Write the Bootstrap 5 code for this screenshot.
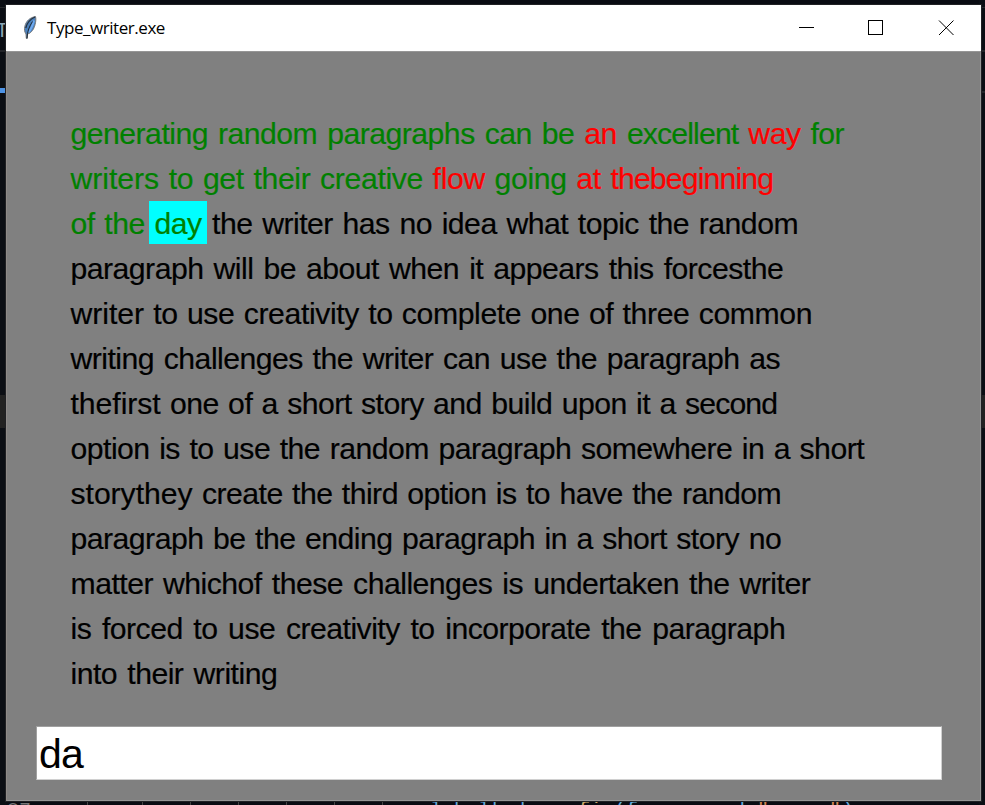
<!DOCTYPE html>
<html lang="en">
<head>
<meta charset="utf-8">
<meta name="viewport" content="width=device-width, initial-scale=1">
<title>Type_writer.exe</title>
<link href="https://cdn.jsdelivr.net/npm/bootstrap@5.3.0/dist/css/bootstrap.min.css" rel="stylesheet">
<style>
  body { background: #090b12; height: 805px; width: 985px; font-family: "Liberation Sans", Arial, sans-serif; }
  .desk { width: 985px; height: 805px; }
  /* editor that shows around the window */
  .edge { top: 0; height: 805px; width: 6px; background: #0b0e14; }
  .edge i { display: block; position: absolute; left: 0; width: 100%; }
  .edge b { position: absolute; top: 18px; left: -4px; font: 20px/24px "Liberation Sans", sans-serif; color: #8ba5b5; }
  .code-strip { left: 0; top: 802px; width: 985px; height: 3px; font: 20px/20px "Liberation Mono", monospace; color: #62aadb; }
  .code-strip span { position: absolute; top: -1px; white-space: pre; }
  .code-strip i { position: absolute; top: 0; width: 1px; height: 3px; background: #444; }
  .win { margin: 5px 0 0 6px; width: 975px; height: 796px; background: #808080; outline: 1px solid #202124; }
  .title-row { height: 46px; background: #fff; flex: none; }
  .title-text { font: 17px/46px "Open Sans", "Noto Sans", sans-serif; letter-spacing: -.45px; color: #000; margin-left: 9px; }
  .frame-body { border: 1px solid #969696; border-left-color: #8e8a88; }
  .words { padding: 59px 0 0 58.500px; }
  .ln { height: 45px; font-size: 30.2px; line-height: 46px; color: #000; font-kerning: none; letter-spacing: -.52px; -webkit-text-stroke: .2px; }
  .ln span { padding: 0 4.300px 0 5px; height: 43px; flex: none; white-space: pre; }
  .ok { color: #008000; } .bad { color: #f00; } .cur { background: #0ff; }
  .ln .cur { padding-right: 5px; }
  .ln .tight { letter-spacing: -.85px; }
  .ln .wide { letter-spacing: -.05px; }
  .l2 { letter-spacing: -.36px; } .l5 { letter-spacing: -.4px; }
  .l1{width:783px} .l2{width:712px} .l3{width:737px} .l4{width:722px} .l5{width:751px} .l6{width:719px} .l7{width:716px}
  .l8{width:803px} .l9{width:720px} .l10{width:720px} .l11{width:749px} .l12{width:724px} .l13{width:216px}
  .entry { margin: 30px 0 0 29px; width: 906px; height: 54px; padding: 2px 0 0 2px; border: 1px solid; border-color: #a0a0a0 #d0d0d0 #d0d0d0 #a0a0a0; background: #fff; color: #000; font-size: 41px; line-height: 50px; letter-spacing: -.8px; outline: none; border-radius: 0; }
</style>
<script src="https://cdn.jsdelivr.net/npm/bootstrap@5.3.0/dist/js/bootstrap.bundle.min.js"></script>
</head>
<body class="m-0 overflow-hidden">
<div class="desk position-relative overflow-hidden">
  <div class="edge position-absolute start-0 overflow-hidden">
    <i style="top:7px;height:1px;background:#25272b"></i>
    <b>T</b>
    <i style="top:50px;height:2px;background:#222429"></i>
    <i style="top:88px;height:5px;background:#4d93e6"></i>
    <i style="top:395px;height:33px;background:#222"></i>
  </div>
  <div class="edge position-absolute end-0">
    <i style="top:7px;height:1px;background:#25272b"></i>
    <i style="top:50px;height:2px;background:#222429"></i>
    <i style="top:91px;height:2px;background:#222429"></i>
    <i style="top:395px;height:33px;background:#222"></i>
  </div>
  <div class="code-strip position-absolute overflow-hidden">
    <span style="left:7px;color:#777">87</span>
    <i style="left:87px"></i><i style="left:142px"></i><i style="left:190px"></i><i style="left:238px"></i><i style="left:286px"></i><i style="left:334px"></i><i style="left:382px"></i>
    <span style="left:430px">label</span><span style="left:492px">b</span><span style="left:520px">b</span>
    <span style="left:578px;color:#c9a86a">fi</span><span style="left:614px">(f</span>
    <span style="left:733px">d</span><span style="left:757px;color:#ce8250">"</span><span style="left:829px;color:#ce8250">"</span><span style="left:842px">)</span>
  </div>
  <main class="win position-relative d-flex flex-column">
    <header class="title-row d-flex align-items-center">
      <svg class="ms-3" width="16" height="26" viewBox="0 0 16 26">
        <path d="M13.500 1.500C8 2.500 4 6 2.800 11.500c-.6 3-.5 5 1.200 7.500l.3 4.300h1L5.500 19c4-1 6.500-5 7.600-9.500.8-3 1-6 .4-8z" fill="#4b80bb" stroke="#77797b"/>
        <path d="M13 2C8.500 4 5 8 3.800 13" fill="none" stroke="#253240" stroke-width="1.300"/>
        <path d="M12 5.500C10.500 11 8.500 15 6.500 17.500" fill="none" stroke="#6faaf0" stroke-width="2"/>
        <path d="M10.500 6.500C7.500 11 5.300 16 4.900 23.500" fill="none" stroke="#1b2733" stroke-width="1"/>
      </svg>
      <span class="title-text">Type_writer.exe</span>
      <svg class="ms-auto" width="188" height="46" viewBox="0 0 188 46" fill="none" stroke="#000">
        <path d="M6 22.500h15M75.500 15.500h14v14h-14z" shape-rendering="crispEdges"/>
        <path d="M146 15.500l14.500 14.500M160.500 15.500L146 30"/>
      </svg>
    </header>
    <section class="frame-body flex-grow-1">
      <div class="words">
        <div class="ln l1 d-flex justify-content-between ok"><span>generating</span><span>random</span><span>paragraphs</span><span>can</span><span>be</span><span class="bad">an</span><span class="tight">excellent</span><span class="bad">way</span><span>for</span></div>
        <div class="ln l2 d-flex justify-content-between ok"><span class="wide">writers</span><span>to</span><span>get</span><span>their</span><span>creative</span><span class="bad">flow</span><span>going</span><span class="bad">at</span><span class="bad tight">thebeginning</span></div>
        <div class="ln l3 d-flex justify-content-between"><span class="ok">of</span><span class="ok">the</span><span class="ok cur">day</span><span>the</span><span>writer</span><span>has</span><span>no</span><span>idea</span><span>what</span><span>topic</span><span>the</span><span>random</span></div>
        <div class="ln l4 d-flex justify-content-between"><span>paragraph</span><span>will</span><span>be</span><span>about</span><span>when</span><span>it</span><span>appears</span><span>this</span><span>forcesthe</span></div>
        <div class="ln l5 d-flex justify-content-between"><span class="wide">writer</span><span>to</span><span>use</span><span>creativity</span><span>to</span><span>complete</span><span>one</span><span>of</span><span>three</span><span>common</span></div>
        <div class="ln l6 d-flex justify-content-between"><span>writing</span><span>challenges</span><span>the</span><span>writer</span><span>can</span><span>use</span><span>the</span><span>paragraph</span><span>as</span></div>
        <div class="ln l7 d-flex justify-content-between"><span class="wide">thefirst</span><span>one</span><span>of</span><span>a</span><span>short</span><span>story</span><span>and</span><span>build</span><span>upon</span><span>it</span><span>a</span><span class="tight">second</span></div>
        <div class="ln l8 d-flex justify-content-between"><span>option</span><span>is</span><span>to</span><span>use</span><span>the</span><span>random</span><span>paragraph</span><span>somewhere</span><span>in</span><span>a</span><span>short</span></div>
        <div class="ln l9 d-flex justify-content-between"><span class="wide">storythey</span><span>create</span><span>the</span><span>third</span><span>option</span><span>is</span><span>to</span><span>have</span><span>the</span><span>random</span></div>
        <div class="ln l10 d-flex justify-content-between"><span>paragraph</span><span>be</span><span>the</span><span>ending</span><span>paragraph</span><span>in</span><span>a</span><span>short</span><span>story</span><span>no</span></div>
        <div class="ln l11 d-flex justify-content-between"><span>matter</span><span>whichof</span><span>these</span><span>challenges</span><span>is</span><span>undertaken</span><span>the</span><span>writer</span></div>
        <div class="ln l12 d-flex justify-content-between"><span>is</span><span>forced</span><span>to</span><span>use</span><span>creativity</span><span>to</span><span>incorporate</span><span>the</span><span>paragraph</span></div>
        <div class="ln l13 d-flex justify-content-between"><span>into</span><span>their</span><span>writing</span></div>
      </div>
      <input class="entry d-block" type="text" value="da" aria-label="Typed word">
    </section>
  </main>
</div>
</body>
</html>
